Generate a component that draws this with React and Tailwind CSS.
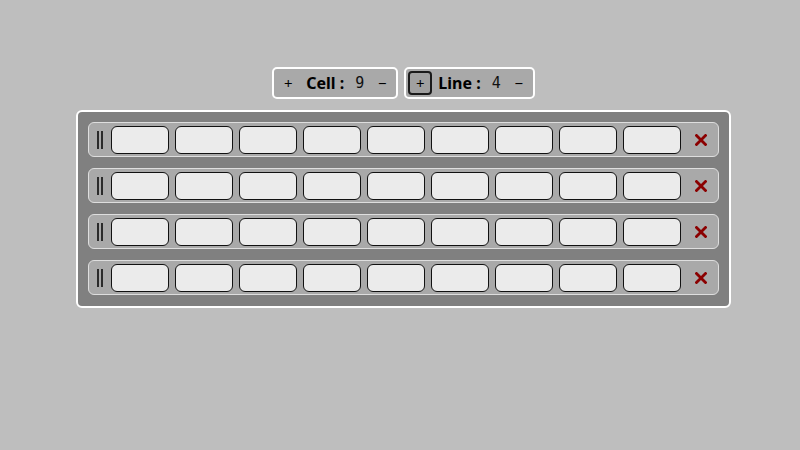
import { useState } from 'react';

/* ============================================================
   GRID EDITOR
============================================================ */
function Counter({ label, value, active }) {
  return (
    <div className="flex h-[32px] items-center rounded-[5px] border-2 border-white bg-[#a9a9a9] px-[2px]">
      <button
        className={
          'grid h-[24px] w-[24px] place-items-center rounded-[4px] border-2 text-[15px] leading-none text-black ' +
          (active ? 'border-[#1a1a1a] bg-[#a0a0a0]' : 'border-transparent')
        }
      >
        +
      </button>
      <span className="ml-[6px] text-[16px] font-bold text-black">{label} :</span>
      <span className="ml-[11px] font-['DejaVu_Sans_Mono',monospace] text-[15px] text-[#111]">{value}</span>
      <button className="ml-[6px] grid h-[24px] w-[24px] place-items-center text-[15px] leading-none text-black">
        −
      </button>
    </div>
  );
}

function Row({ cells }) {
  return (
    <div className="flex h-[35px] items-center rounded-[6px] border border-[#dedede] bg-[#a9a9a9] pl-[8px]">
      <div className="flex h-[18px] w-[6px] justify-between">
        <span className="block h-full w-[2px] bg-[#2b2b2b]" />
        <span className="block h-full w-[2px] bg-[#2b2b2b]" />
      </div>
      <div className="ml-[8px] flex gap-[6px]">
        {Array.from({ length: cells }).map((_, i) => (
          <div key={i} className="h-[28px] w-[58px] rounded-[6px] border border-[#111] bg-[#ebebeb]" />
        ))}
      </div>
      <svg className="ml-[14px]" width="12" height="12" viewBox="0 0 12 12">
        <path d="M1.5 1.5 L10.5 10.5 M10.5 1.5 L1.5 10.5" stroke="#8b0000" strokeWidth="2.8" strokeLinecap="square" />
      </svg>
    </div>
  );
}

export default function App() {
  const [cells] = useState(9);
  const [lines] = useState(4);

  return (
    <div className="min-h-[450px] bg-[#bebebe] pl-[7px] pt-[67px] font-['Noto_Sans','DejaVu_Sans',sans-serif]">
      <div className="flex flex-col items-center">
        <div className="flex gap-[6px]">
          <Counter label="Cell" value={cells} />
          <Counter label="Line" value={lines} active />
        </div>
        <div className="mt-[11px] flex w-[655px] flex-col gap-[11px] rounded-[6px] border-2 border-white bg-[#808080] px-[10px] pb-[11px] pt-[10px]">
          {Array.from({ length: lines }).map((_, i) => (
            <Row key={i} cells={cells} />
          ))}
        </div>
      </div>
    </div>
  );
}
